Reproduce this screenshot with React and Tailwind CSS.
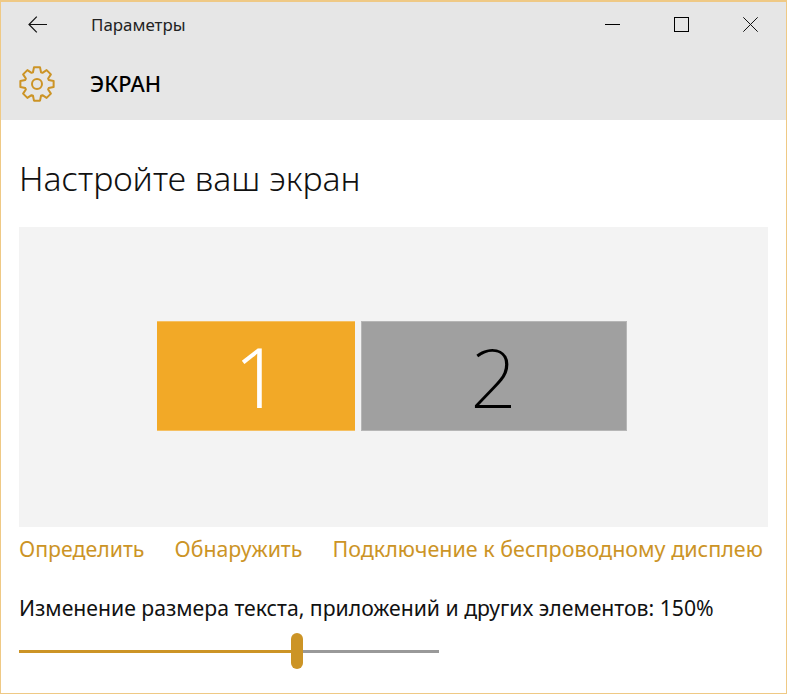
import React from "react";

const F = { fontFamily: '"Noto Sans", "Open Sans", sans-serif' };

function Gear() {
  const pts = [];
  const n = 8;
  for (let i = 0; i < n; i++) {
    const a = (i * 2 * Math.PI) / n - Math.PI / 2;
    const P = (r, t) => `${(18 + r * Math.cos(t)).toFixed(2)} ${(18 + r * Math.sin(t)).toFixed(2)}`;
    pts.push(P(12.4, a - 0.33), P(16.9, a - 0.18), P(16.9, a + 0.18), P(12.4, a + 0.33));
  }
  return (
    <svg width="36" height="36" viewBox="0 0 36 36" fill="none" stroke="#cc9426" strokeWidth="2" strokeLinejoin="round">
      <path d={`M${pts.join("L")}Z`} />
      <circle cx="18" cy="18" r="5" />
    </svg>
  );
}

export default function App() {
  return (
    <div style={F} className="w-[787px] h-[694px] bg-white border border-[#efc985] border-t-2 flex flex-col overflow-hidden">
      <div className="bg-[#e6e6e6] h-[118px] flex flex-col shrink-0">
        <div className="h-[45px] flex items-center shrink-0">
          <div className="w-[72px] pl-[27px] shrink-0">
            <svg className="block" width="19" height="17" viewBox="0 0 19 17" fill="none" stroke="#111" strokeWidth="1.2">
              <path d="M0.8 8.5H19M8.8 0.6L1 8.5l7.8 7.9" />
            </svg>
          </div>
          <span className="ml-[18px] text-[16.9px] text-[#222] leading-none mt-[2px]">Параметры</span>
          <div className="ml-auto flex items-center pr-[28px]">
            <div className="w-[15px] h-px bg-black" />
            <div className="ml-[54px] w-[15px] h-[15px] border border-black" />
            <svg className="ml-[54px] block" width="15" height="15" viewBox="0 0 15 15" fill="none" stroke="#111" strokeWidth="1">
              <path d="M0.3 0.3L14.7 14.7M14.7 0.3L0.3 14.7" />
            </svg>
          </div>
        </div>
        <div className="flex items-center pl-[18px] h-[73px]">
          <Gear />
          <span className="ml-[35px] text-[21.8px] font-medium text-black leading-none">ЭКРАН</span>
        </div>
      </div>
      <div className="pl-[18px] pr-[18px] flex flex-col">
        <h1 className="text-[33.8px] font-light text-[#111] leading-[40px] mt-[38px]">Настройте ваш экран</h1>
        <div className="mt-[29px] h-[300px] bg-[#f3f3f3] flex justify-center items-center gap-[6px] pr-[4px] pb-[2px]">
          <div className="w-[198px] h-[110px] bg-[#f2a927] border-y border-[#f5c062] flex items-center justify-center text-white text-[82px] font-light leading-none pl-[4px]">1</div>
          <div className="w-[266px] h-[110px] bg-[#a0a0a0] border border-[#b6b6b6] flex items-center justify-center text-black text-[82px] font-extralight leading-none">2</div>
        </div>
        <div className="mt-[8px] flex gap-[30px] text-[21.3px] leading-[28px] text-[#cc9426] whitespace-nowrap">
          <span>Определить</span>
          <span>Обнаружить</span>
          <span className="text-[21.5px]">Подключение к беспроводному дисплею</span>
        </div>
        <p className="mt-[32px] text-[21.2px] leading-[26px] text-[#111] whitespace-nowrap">Изменение размера текста, приложений и других элементов: 150%</p>
        <div className="mt-[12px] w-[420px] h-[36px] flex items-center relative">
          <div className="w-[272px] h-[3px] bg-[#cc9426]" />
          <div className="flex-1 h-[3px] bg-[#999999]" />
          <div className="absolute left-[272px] top-0 w-[12px] h-[36px] rounded-[6px] bg-[#cc9426]" />
        </div>
      </div>
    </div>
  );
}
